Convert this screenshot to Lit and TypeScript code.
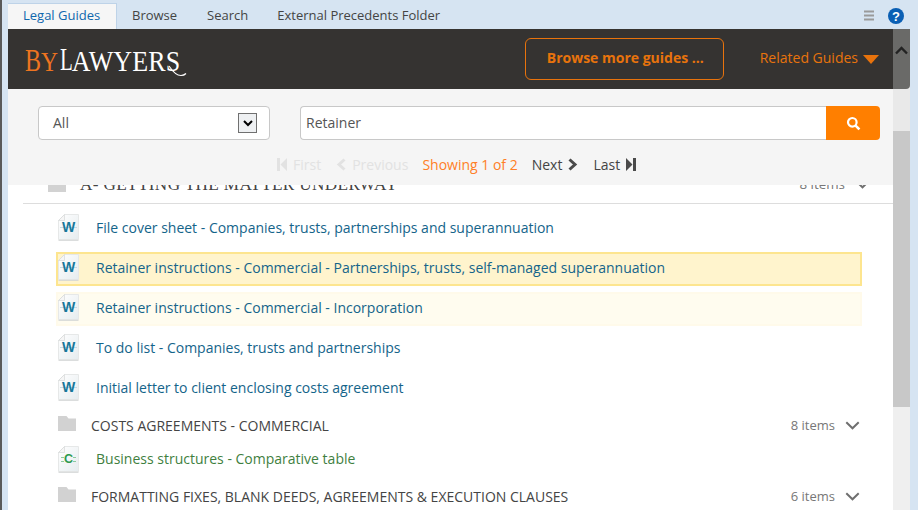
import { LitElement, html, css, svg } from "lit";
import { customElement } from "lit/decorators.js";

const wordIcon = (letter: string, color: string) => html`<svg class="doc" width="22" height="27" viewBox="0 0 22 27">
  <defs><linearGradient id="pg" x1="0" y1="0" x2="1" y2="1"><stop offset="0" stop-color="#ffffff"/><stop offset="1" stop-color="#e6ecef"/></linearGradient></defs>
  <path d="M6.5 .5H20.5V25.5H.5V6.5Z" fill="url(#pg)" stroke="#e6e8e8"/>
  <path d="M.5 6.5L6.5 .5V6.5Z" fill="#f6f6f6" stroke="#d6d8d8" stroke-width=".7"/>
  <path d="M.5 26.3H20.5" stroke="#d2d5d5"/>
  ${letter === "C"
    ? svg`<path d="M3 11.5H6M15 11.5H18M3 15.5H6M15 15.5H18" stroke="#8ccb9c" stroke-width="1"/>`
    : svg`<path d="M2 13.5H19" stroke="#c4dbe6" stroke-width="1"/>`}
  <text x="10.5" y="${letter === "C" ? 17 : 18}" text-anchor="middle" font-family="'Liberation Sans',sans-serif" font-weight="700" font-size="${letter === "C" ? 12.5 : 14}" fill="${color}">${letter}</text>
</svg>`;

const folder = html`<svg class="folder" width="18" height="15" viewBox="0 0 18 15"><path d="M0 0H8.5L10.5 2.4H18V15H0Z" fill="#d2d2d2"/></svg>`;
const chevron = html`<svg width="15" height="9" viewBox="0 0 15 9"><path d="M1.3 1.3L7.5 7.3L13.7 1.3" fill="none" stroke="#6f6f6f" stroke-width="2"/></svg>`;

@customElement("app-root")
export class AppRoot extends LitElement {
  static styles = css`
    :host { display: block; width: 918px; height: 510px; overflow: hidden; background: #d6e4f2; font-family: "Open Sans", sans-serif; font-size: 14px; color: #444; }
    .frame { height: 510px; box-sizing: border-box; border-left: 2px solid #5a5a5a; padding: 0 8px 0 6px; display: flex; flex-direction: column; }
    .tabs { height: 29px; flex: none; display: flex; align-items: flex-end; }
    .tab { height: 26px; line-height: 24px; padding: 0 15px; font-size: 13px; color: #444; box-sizing: border-box; white-space: nowrap; }
    .tab.last { padding-left: 14px; }
    .tab.active { width: 109px; background: #f6f6f6; color: #0f67ad; border-top: 1px solid #bed3e8; border-right: 1px solid #bed3e8; line-height: 23px; }
    .tools { margin-left: auto; align-self: stretch; display: flex; align-items: center; gap: 14px; padding: 2px 6px 0 0; }
    .body { flex: 1; min-height: 0; display: flex; }
    .main { flex: 1; min-width: 0; display: flex; flex-direction: column; background: #fff; }
    .bar { height: 60px; flex: none; background: #353331; display: flex; align-items: center; box-sizing: border-box; padding: 0 14px 0 17px; }
    .logo { font-family: "Liberation Serif", serif; color: #fff; position: relative; height: 30px; line-height: 30px; white-space: nowrap; display: flex; align-items: baseline; margin-top: 7px; }
    .logo span { display: inline-block; transform-origin: 50% 23px; }
    .lb { color: #ee7420; font-size: 24px; transform: scaleY(1.3); }
    .ly { color: #ee7420; font-size: 23.5px; transform: scaleY(1.2); }
    .ll { font-size: 21px; transform: scaleY(1.55); margin-left: 2px; }
    .la { font-size: 26px; transform: scaleY(1.1); margin-left: -1px; letter-spacing: .15px; }
    .logo svg { position: absolute; left: 143px; top: 17px; }
    .browse { margin-left: auto; width: 199px; height: 42px; box-sizing: border-box; border: 1px solid #e8730c; border-radius: 6px; display: flex; align-items: center; padding: 0 0 4px 21px; color: #e8730c; font-weight: 700; font-size: 14px; }
    .related { display: flex; align-items: center; gap: 5px; margin-left: 36px; color: #e8730c; font-size: 14px; }
    .related span { padding-bottom: 4px; }
    .search { height: 96px; flex: none; background: #f5f5f5; box-sizing: border-box; padding: 17px 13px 0 30px; }
    .fields { display: flex; height: 34px; }
    .select { width: 232px; box-sizing: border-box; border: 1px solid #c8c8c8; border-radius: 4px; background: #fff; display: flex; align-items: center; justify-content: space-between; padding: 0 12px 0 14px; color: #555; font-size: 14px; }
    .select span, .input span { padding-bottom: 2px; }
    .selbtn { width: 19px; height: 20px; box-sizing: border-box; border: 1px solid #707070; background: #eef0f2; display: flex; align-items: center; justify-content: center; }
    .input { margin-left: 30px; flex: 1; box-sizing: border-box; border: 1px solid #c8c8c8; border-right: 0; border-radius: 4px 0 0 4px; background: #fff; padding: 0 5px; display: flex; align-items: center; color: #555; font-size: 14px; }
    .go { width: 54px; background: #ff7f00; border-radius: 0 4px 4px 0; display: flex; align-items: center; justify-content: center; }
    .pager { display: flex; align-items: center; margin-top: 14px; height: 20px; padding-left: 239px; font-size: 14px; }
    .pager span { display: flex; align-items: center; gap: 6px; white-space: nowrap; }
    .off { color: #e2e2e2; }
    .gap { margin-left: 15px; }
    .show { color: #ff7f27; margin: 0 14px; }
    .on { color: #444; }
    .list { flex: 1; min-height: 0; overflow: hidden; padding-left: 15px; }
    .head { height: 18px; border-bottom: 1px solid #ddd; overflow: hidden; }
    .headin { display: flex; align-items: center; height: 22px; margin-top: -12px; padding: 0 23px 0 25px; }
    .headin .t { font-family: "Liberation Serif", serif; font-size: 17.2px; color: #444; margin: 2px 0 0 14px; letter-spacing: .35px; white-space: nowrap; }
    .count { margin-left: auto; display: flex; align-items: center; gap: 10px; color: #777; font-size: 13px; white-space: nowrap; }
    .headin .count { font-size: 13.4px; }
    .rows { padding: 8px 31px 0 33px; display: flex; flex-direction: column; }
    .row { height: 34px; box-sizing: border-box; border: 2px solid transparent; display: flex; align-items: center; margin-bottom: 6px; padding-bottom: 3px; color: #14648a; font-size: 14px; white-space: nowrap; }
    .row .doc { margin-right: 16px; flex: none; }
    .row.sel { background: #fff4cd; border-color: #fde58f; }
    .row.soft { background: #fffcef; border-color: #fffaea; }
    .fold { height: 26px; display: flex; align-items: center; color: #444; font-size: 14px; padding-left: 2px; white-space: nowrap; }
    .fold .folder { margin-right: 15px; margin-top: -4px; }
    .fold .count { padding-right: 2px; }
    .row.c { height: 30px; border-width: 0 2px; margin: 8px 0 7px; padding-bottom: 5px; color: #3f7f3f; }
    .row.c .doc { margin-top: 2px; }
    .scroll { width: 17px; flex: none; display: flex; flex-direction: column; background: #efefef; }
    .stop { height: 60px; background: #6a6a68; border-radius: 0 0 4px 0; display: flex; justify-content: center; padding-top: 17px; box-sizing: border-box; }
    .strack { height: 42px; background: #e9e9e9; }
    .thumb { height: 276px; background: #c8c8c8; }
  `;

  render() {
    return html`<div class="frame">
      <div class="tabs">
        <div class="tab active">Legal Guides</div>
        <div class="tab">Browse</div>
        <div class="tab">Search</div>
        <div class="tab last">External Precedents Folder</div>
        <div class="tools">
          <svg width="10" height="11" viewBox="0 0 10 11"><path d="M0 1.5H10M0 5.5H10M0 9.5H10" stroke="#9a9a9a" stroke-width="2"/></svg>
          <svg width="16" height="16" viewBox="0 0 16 16"><circle cx="8" cy="8" r="8" fill="#0a5fb4"/><text x="8" y="12.5" text-anchor="middle" fill="#fff" font-family="'Liberation Sans',sans-serif" font-weight="700" font-size="13">?</text></svg>
        </div>
      </div>
      <div class="body">
        <div class="main">
          <div class="bar">
            <div class="logo"><span class="lb">B</span><span class="ly">Y</span><span class="ll">L</span><span class="la">AWYERS</span>
              <svg width="20" height="14" viewBox="0 0 20 14"><path d="M1 1C5 7 9 10.5 13 10.5C15 10.5 16.5 10 18 8.5" fill="none" stroke="#fff" stroke-width="1.2"/></svg>
            </div>
            <div class="browse">Browse more guides ...</div>
            <div class="related"><span>Related Guides</span> <svg width="16" height="9" viewBox="0 0 16 9"><path d="M0 0H16L8 9Z" fill="#e8730c"/></svg></div>
          </div>
          <div class="search">
            <div class="fields">
              <div class="select"><span>All</span> <div class="selbtn"><svg width="10" height="7" viewBox="0 0 10 7"><path d="M1 1L5 5L9 1" fill="none" stroke="#000" stroke-width="2"/></svg></div></div>
              <div class="input"><span>Retainer</span></div>
              <div class="go"><svg width="15" height="15" viewBox="0 0 15 15"><circle cx="6.3" cy="6.3" r="4.3" fill="none" stroke="#fff" stroke-width="2.2"/><path d="M9.6 9.6L13.4 13.4" stroke="#fff" stroke-width="2.6"/></svg></div>
            </div>
            <div class="pager">
              <span class="off"><svg width="10" height="13" viewBox="0 0 10 13"><path d="M0 0H3V13H0ZM10 0V13L3.5 6.5Z" fill="#e2e2e2"/></svg>First</span>
              <span class="off gap"><svg width="10" height="13" viewBox="0 0 10 13"><path d="M8.5 1.5L3 6.5L8.5 11.5" fill="none" stroke="#e2e2e2" stroke-width="3"/></svg>Previous</span>
              <span class="show">Showing 1 of 2</span>
              <span class="on">Next <svg width="10" height="13" viewBox="0 0 10 13"><path d="M1.5 1.5L7 6.5L1.5 11.5" fill="none" stroke="#4a4a4a" stroke-width="3"/></svg></span>
              <span class="on gap">Last <svg width="10" height="13" viewBox="0 0 10 13"><path d="M0 0V13L6.5 6.5ZM7 0H10V13H7Z" fill="#4a4a4a"/></svg></span>
            </div>
          </div>
          <div class="list">
            <div class="head"><div class="headin">${folder}<span class="t">A- GETTING THE MATTER UNDERWAY</span><span class="count">8 items ${chevron}</span></div></div>
            <div class="rows">
              <div class="row">${wordIcon("W", "#17779a")}File cover sheet - Companies, trusts, partnerships and superannuation</div>
              <div class="row sel">${wordIcon("W", "#17779a")}Retainer instructions - Commercial - Partnerships, trusts, self-managed superannuation</div>
              <div class="row soft">${wordIcon("W", "#17779a")}Retainer instructions - Commercial - Incorporation</div>
              <div class="row">${wordIcon("W", "#17779a")}To do list - Companies, trusts and partnerships</div>
              <div class="row">${wordIcon("W", "#17779a")}Initial letter to client enclosing costs agreement</div>
              <div class="fold">${folder}COSTS AGREEMENTS - COMMERCIAL<span class="count">8 items ${chevron}</span></div>
              <div class="row c">${wordIcon("C", "#2f9a4f")}Business structures - Comparative table</div>
              <div class="fold">${folder}FORMATTING FIXES, BLANK DEEDS, AGREEMENTS &amp; EXECUTION CLAUSES<span class="count">6 items ${chevron}</span></div>
            </div>
          </div>
        </div>
        <div class="scroll">
          <div class="stop"><svg width="13" height="9" viewBox="0 0 13 9"><path d="M1 7.5L6.5 2L12 7.5" fill="none" stroke="#222" stroke-width="2.4"/></svg></div>
          <div class="strack"></div>
          <div class="thumb"></div>
        </div>
      </div>
    </div>`;
  }
}
